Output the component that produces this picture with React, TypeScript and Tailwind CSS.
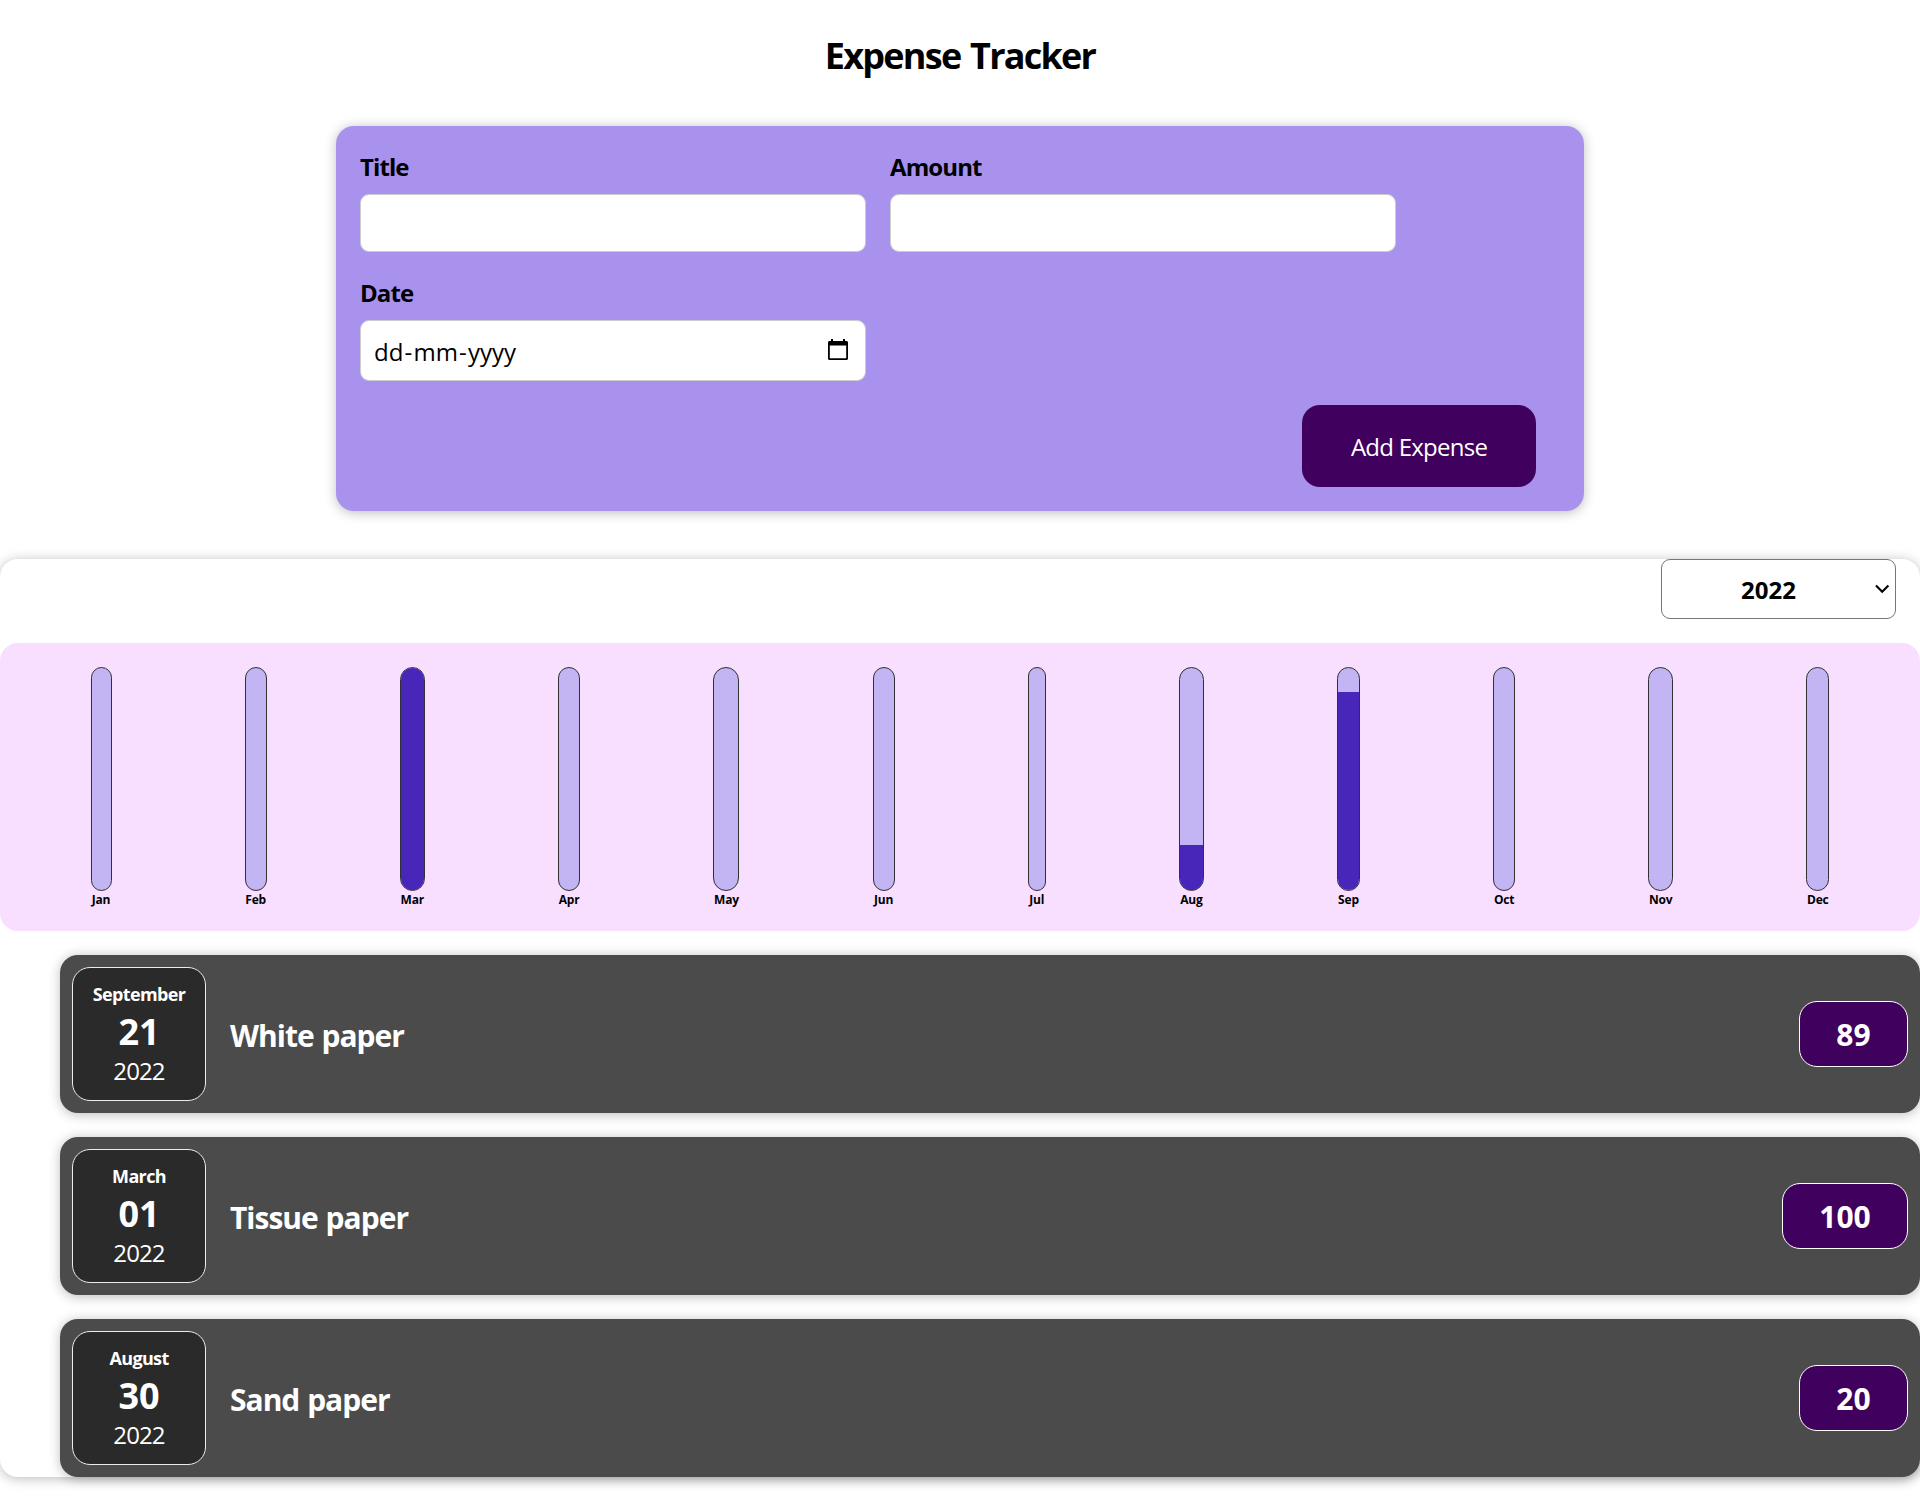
const months = [
  { label: 'Jan', width: 21, value: 0 },
  { label: 'Feb', width: 22, value: 0 },
  { label: 'Mar', width: 25, value: 100 },
  { label: 'Apr', width: 22.4, value: 0 },
  { label: 'May', width: 26, value: 0 },
  { label: 'Jun', width: 22, value: 0 },
  { label: 'Jul', width: 18, value: 0 },
  { label: 'Aug', width: 25, value: 20.3 },
  { label: 'Sep', width: 23, value: 89 },
  { label: 'Oct', width: 22, value: 0 },
  { label: 'Nov', width: 25, value: 0 },
  { label: 'Dec', width: 23, value: 0 },
];

const expenses = [
  { month: 'September', day: '21', year: '2022', title: 'White paper', amount: '89', pill: 'w-[109px]' },
  { month: 'March', day: '01', year: '2022', title: 'Tissue paper', amount: '100', pill: 'w-[126px]' },
  { month: 'August', day: '30', year: '2022', title: 'Sand paper', amount: '20', pill: 'w-[109px]' },
];

const cardShadow = 'shadow-[0_1.5px_12px_rgba(0,0,0,0.25)]';

function Field({ label, children }: { label: string; children: React.ReactNode }) {
  return (
    <div className="w-[506px]">
      <label className="mb-[10px] block text-2xl leading-[34px] font-bold tracking-[-0.9px]">{label}</label>
      {children}
    </div>
  );
}

function CalendarIcon() {
  return (
    <svg width="20" height="21" viewBox="0 0 20 21" className="mb-[3px]">
      <path
        fill="#000"
        fillRule="evenodd"
        d="M3 0h2v2h10V0h2v2h1.500c.8 0 1.500.7 1.500 1.500v16c0 .8-.7 1.500-1.500 1.500h-17C.7 21 0 20.300 0 19.500v-16C0 2.700.7 2 1.500 2H3zM1.800 6.500v12.700h16.400V6.500z"
      />
    </svg>
  );
}

function ExpenseForm() {
  return (
    <form className={`mx-auto mt-[46px] h-[385px] w-[1248px] rounded-[18px] bg-[#a892ee] p-6 ${cardShadow}`}>
      <div className="flex flex-wrap gap-6">
        <Field label="Title">
          <input type="text" className="block h-[58px] w-full rounded-[9px] border border-[#ccc] bg-white px-3 text-2xl" />
        </Field>
        <Field label="Amount">
          <input type="text" className="block h-[58px] w-full rounded-[9px] border border-[#ccc] bg-white px-3 text-2xl" />
        </Field>
        <Field label="Date">
          <div className="flex h-[61px] w-full items-center justify-between rounded-[9px] border border-[#ccc] bg-white px-[13px] pr-[17px]">
            <span className="pt-[3px] text-2xl leading-8">
              dd<span className="mx-[1.2px]">-</span>mm<span className="mx-[1.2px]">-</span>yyyy
            </span>
            <CalendarIcon />
          </div>
        </Field>
      </div>
      <div className="mt-6 flex justify-end pr-6">
        <button
          type="button"
          className="h-[82px] w-[234px] rounded-[18px] bg-[#40005d] pt-px text-2xl tracking-[-0.75px] text-white"
        >
          Add Expense
        </button>
      </div>
    </form>
  );
}

function YearFilter() {
  return (
    <div className="flex justify-end pr-6">
      <div className="flex h-[60px] w-[235px] items-center rounded-[9px] border border-[#767676] bg-white pr-[5px]">
        <span className="flex-1 pt-[1px] text-center text-2xl leading-8 font-bold">2022</span>
        <svg width="15" height="10" viewBox="0 0 15 10" fill="none">
          <path d="M1 1.500l6.200 6.200 6.200-6.200" stroke="#000" strokeWidth="2.100" />
        </svg>
      </div>
    </div>
  );
}

function Chart() {
  return (
    <div className="mt-6 flex h-[288px] justify-around rounded-[18px] bg-[#f8dfff] p-6">
      {months.map((m) => (
        <div key={m.label} className="flex flex-col items-center" style={{ width: m.width }}>
          <div className="flex h-56 w-full shrink-0 flex-col justify-end overflow-hidden rounded-[18px] border border-[#313131] bg-[#c3b4f3]">
            <div className="w-full bg-[#4826b9]" style={{ height: `${m.value}%` }} />
          </div>
          <span className="mt-px text-center text-xs leading-4 font-bold tracking-[-0.2px] whitespace-nowrap">{m.label}</span>
        </div>
      ))}
    </div>
  );
}

export default function App() {
  return (
    <div className='h-[1501px] w-full overflow-hidden bg-white pt-[32px] font-["Segoe_UI","Open_Sans",sans-serif] text-black'>
      <h1 className="text-center text-4xl leading-[48px] font-bold tracking-[-1.75px] [word-spacing:2px]">Expense Tracker</h1>
      <ExpenseForm />
      <section className={`mt-12 h-[918px] rounded-[18px] bg-white ${cardShadow}`}>
        <YearFilter />
        <Chart />
        <ul className="mt-6 flex flex-col gap-6 pl-[60px]">
          {expenses.map((e) => (
            <li key={e.title} className={`flex h-[158px] items-center rounded-[18px] bg-[#4b4b4b] p-3 text-white ${cardShadow}`}>
              <div className="flex h-[134px] w-[134px] flex-col items-center rounded-[18px] border border-[#ececec] bg-[#2a2a2a] pt-[14px]">
                <span className="text-lg leading-6 font-bold tracking-[-0.65px]">{e.month}</span>
                <span className="mt-0.5 text-4xl leading-[48px] font-bold">{e.day}</span>
                <span className="-mt-px text-2xl leading-8 tracking-[-0.9px]">{e.year}</span>
              </div>
              <h2 className="ml-6 flex-1 pt-[3px] text-3xl leading-10 font-bold tracking-[-1px] [word-spacing:1px]">{e.title}</h2>
              <div className={`flex h-[66px] items-center justify-center rounded-[18px] border border-white bg-[#40005d] pt-[2px] text-3xl font-bold ${e.pill}`}>
                {e.amount}
              </div>
            </li>
          ))}
        </ul>
      </section>
    </div>
  );
}
